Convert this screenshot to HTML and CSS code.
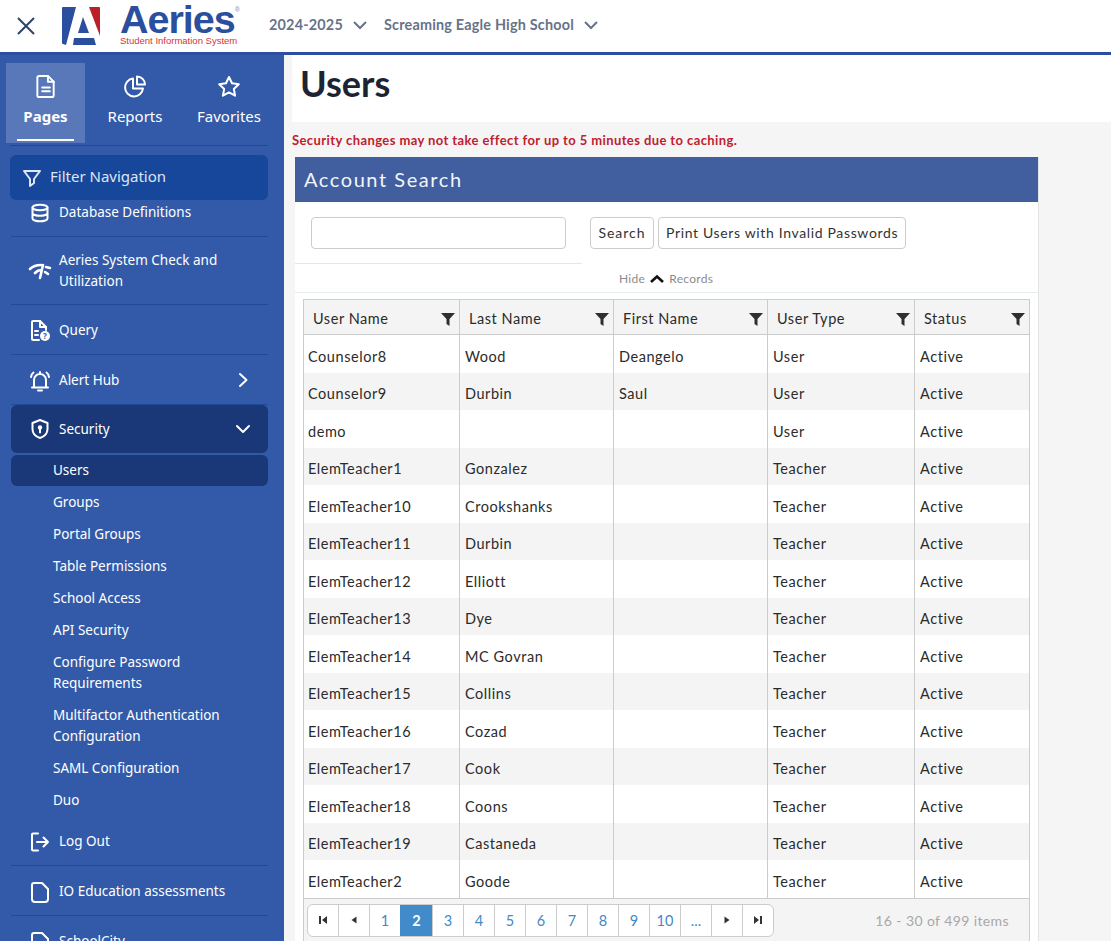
FILE: index.html
```html
<!DOCTYPE html>
<html lang="en">
<head>
<meta charset="utf-8">
<title>Users</title>
<link rel="stylesheet" href="styles.css">
</head>
<body>
<header class="topbar">
  <button class="close-btn" aria-label="Close">
    <svg width="22" height="22" viewBox="0 0 22 22"><path d="M3 3l16 16M19 3L3 19" class="ic-close"/></svg>
  </button>
  <svg class="logo-mark" width="40" height="40" viewBox="0 0 40 40">
    <path d="M2 1h13L5 39 2 38a1 1 0 0 1-1-1V2a1 1 0 0 1 1-1z" fill="#2a4f9f"/>
    <path d="M28 1h10a1 1 0 0 1 1 1v28z" fill="#bb2028"/>
    <path d="M22 11l6 16H17z" fill="#2a4f9f"/>
    <path d="M13 32h20l2 7H12z" fill="#2a4f9f"/>
  </svg>
  <div class="logo-text">
    <div class="logo-name"><span>Aeries</span><span class="logo-reg">®</span></div>
    <div class="logo-sub">Student Information System</div>
  </div>
  <div class="selector year">2024-2025
    <svg width="16" height="10" viewBox="0 0 16 10"><path d="M2 2l6 6 6-6" class="ic-chev"/></svg>
  </div>
  <div class="selector school">Screaming Eagle High School
    <svg width="16" height="10" viewBox="0 0 16 10"><path d="M2 2l6 6 6-6" class="ic-chev"/></svg>
  </div>
</header>
<div class="shell">
  <aside class="sidebar">
    <nav class="tabs">
      <div class="tab active">
        <svg width="24" height="26" viewBox="0 0 24 26"><path d="M5 2h9l6 6v14a2 2 0 0 1-2 2H5a2 2 0 0 1-2-2V4a2 2 0 0 1 2-2z" class="ic"/><path d="M14 2v6h6M8 14h8M8 18h8" class="ic"/></svg>
        <span>Pages</span>
      </div>
      <div class="tab">
        <svg width="24" height="24" viewBox="0 0 24 24"><path d="M10 4a9 9 0 1 0 10 10H10z" class="ic"/><path d="M14 2a8 8 0 0 1 8 8h-8z" class="ic"/></svg>
        <span>Reports</span>
      </div>
      <div class="tab">
        <svg width="24" height="24" viewBox="0 0 24 24"><path d="M12 2.500l3 6.300 6.800.9-5 4.700 1.300 6.800-6.100-3.300-6.100 3.300 1.300-6.800-5-4.700 6.800-.9z" class="ic"/></svg>
        <span>Favorites</span>
      </div>
    </nav>
    <div class="filter">
      <svg width="20" height="20" viewBox="0 0 20 20"><path d="M2 3h16l-6 8v4l-4 3v-7z" class="ic-soft"/></svg>
      <span>Filter Navigation</span>
    </div>
    <div class="nav-scroll">
      <ul class="nav">
        <li class="row">
          <svg width="20" height="20" viewBox="0 0 20 20"><ellipse cx="10" cy="4.500" rx="7.500" ry="2.800" class="ic"/><path d="M2.500 4.500v11c0 1.500 3.400 2.800 7.500 2.800s7.500-1.300 7.500-2.800v-11M2.500 10c0 1.500 3.400 2.800 7.500 2.800s7.500-1.300 7.500-2.800" class="ic"/></svg>
          <span>Database Definitions</span>
        </li>
        <li class="row tall">
          <svg width="24" height="20" viewBox="0 0 24 20"><path d="M2 8c3-3 7-4 11-4M7 12c2-2 4-3 6-3M12 17l3-13M18 6l4 1M17 11l3 2" class="ic-bold"/></svg>
          <span>Aeries System Check and Utilization</span>
        </li>
        <li class="row">
          <svg width="20" height="22" viewBox="0 0 20 22"><path d="M9 20H3a1 1 0 0 1-1-1V2a1 1 0 0 1 1-1h7l6 6v3" class="ic"/><path d="M10 1v6h6M5 11h3M5 15h3" class="ic"/><circle cx="15" cy="16" r="5" fill="#fff"/><text x="15" y="19" class="ic-q">?</text></svg>
          <span>Query</span>
        </li>
        <li class="row has-chevron">
          <svg width="22" height="22" viewBox="0 0 22 22"><path d="M5 17V10a6 6 0 0 1 12 0v7M3 17.500h16M9 20.500h4M11 2v2M2 7c.3-2 1-3.500 2.500-4.500M20 7c-.3-2-1-3.500-2.500-4.500" class="ic"/></svg>
          <span>Alert Hub</span>
          <svg class="chev" width="14" height="16" viewBox="0 0 14 16"><path d="M3 2l6.500 6L3 14" class="ic"/></svg>
        </li>
        <li class="row open has-chevron">
          <svg width="20" height="22" viewBox="0 0 20 22"><path d="M10 2l7.500 3v6c0 4.500-3 7.500-7.500 9-4.500-1.500-7.500-4.500-7.500-9V5z" class="ic"/><circle cx="10" cy="9.500" r="2.200" fill="#fff"/><path d="M10 10v4.500" class="ic"/></svg>
          <span>Security</span>
          <svg class="chev" width="16" height="14" viewBox="0 0 16 14"><path d="M2 4l6 6 6-6" class="ic"/></svg>
        </li>
        <li class="sub current">Users</li>
        <li class="sub">Groups</li>
        <li class="sub">Portal Groups</li>
        <li class="sub">Table Permissions</li>
        <li class="sub">School Access</li>
        <li class="sub">API Security</li>
        <li class="sub">Configure Password Requirements</li>
        <li class="sub">Multifactor Authentication Configuration</li>
        <li class="sub">SAML Configuration</li>
        <li class="sub">Duo</li>
        <li class="row logout">
          <svg width="20" height="20" viewBox="0 0 20 20"><path d="M8 1.500H3a1 1 0 0 0-1 1v15a1 1 0 0 0 1 1h5M7 10h11M13.500 5.500L18 10l-4.500 4.500" class="ic"/></svg>
          <span>Log Out</span>
        </li>
        <li class="row">
          <svg width="20" height="22" viewBox="0 0 20 22"><path d="M4 2h8l6 6v10a3 3 0 0 1-3 3H5a3 3 0 0 1-3-3V4a2 2 0 0 1 2-2z" class="ic"/></svg>
          <span>IO Education assessments</span>
        </li>
        <li class="row">
          <svg width="20" height="22" viewBox="0 0 20 22"><path d="M4 2h8l6 6v10a3 3 0 0 1-3 3H5a3 3 0 0 1-3-3V4a2 2 0 0 1 2-2z" class="ic"/></svg>
          <span>SchoolCity</span>
        </li>
      </ul>
    </div>
  </aside>
  <main class="main">
    <div class="title-box"><h1>Users</h1></div>
    <p class="warning">Security changes may not take effect for up to 5 minutes due to caching.</p>
    <section class="panel">
      <h2 class="panel-head">Account Search</h2>
      <div class="search-row">
        <div class="search-left"><input class="search-input" type="text" aria-label="Search"></div>
        <button class="btn btn-search">Search</button>
        <button class="btn">Print Users with Invalid Passwords</button>
      </div>
      <div class="hide-row">
        <span>Hide</span>
        <svg width="14" height="10" viewBox="0 0 14 10"><path d="M1 8L7 2.500 13 8" class="ic-up"/></svg>
        <span>Records</span>
      </div>
      <div class="grid-wrap">
        <table class="grid">
          <colgroup><col class="c1"><col class="c2"><col class="c3"><col class="c4"><col class="c5"></colgroup>
          <thead>
            <tr>
              <th><div class="th-in">User Name<svg class="funnel" viewBox="0 0 14 14"><path d="M0 1h14L8.500 7v7l-3-2V7z"/></svg></div></th>
              <th><div class="th-in">Last Name<svg class="funnel" viewBox="0 0 14 14"><path d="M0 1h14L8.500 7v7l-3-2V7z"/></svg></div></th>
              <th><div class="th-in">First Name<svg class="funnel" viewBox="0 0 14 14"><path d="M0 1h14L8.500 7v7l-3-2V7z"/></svg></div></th>
              <th><div class="th-in">User Type<svg class="funnel" viewBox="0 0 14 14"><path d="M0 1h14L8.500 7v7l-3-2V7z"/></svg></div></th>
              <th><div class="th-in">Status<svg class="funnel" viewBox="0 0 14 14"><path d="M0 1h14L8.500 7v7l-3-2V7z"/></svg></div></th>
            </tr>
          </thead>
          <tbody>
            <tr><td>Counselor8</td><td>Wood</td><td>Deangelo</td><td>User</td><td>Active</td></tr>
            <tr><td>Counselor9</td><td>Durbin</td><td>Saul</td><td>User</td><td>Active</td></tr>
            <tr><td>demo</td><td></td><td></td><td>User</td><td>Active</td></tr>
            <tr><td>ElemTeacher1</td><td>Gonzalez</td><td></td><td>Teacher</td><td>Active</td></tr>
            <tr><td>ElemTeacher10</td><td>Crookshanks</td><td></td><td>Teacher</td><td>Active</td></tr>
            <tr><td>ElemTeacher11</td><td>Durbin</td><td></td><td>Teacher</td><td>Active</td></tr>
            <tr><td>ElemTeacher12</td><td>Elliott</td><td></td><td>Teacher</td><td>Active</td></tr>
            <tr><td>ElemTeacher13</td><td>Dye</td><td></td><td>Teacher</td><td>Active</td></tr>
            <tr><td>ElemTeacher14</td><td>MC Govran</td><td></td><td>Teacher</td><td>Active</td></tr>
            <tr><td>ElemTeacher15</td><td>Collins</td><td></td><td>Teacher</td><td>Active</td></tr>
            <tr><td>ElemTeacher16</td><td>Cozad</td><td></td><td>Teacher</td><td>Active</td></tr>
            <tr><td>ElemTeacher17</td><td>Cook</td><td></td><td>Teacher</td><td>Active</td></tr>
            <tr><td>ElemTeacher18</td><td>Coons</td><td></td><td>Teacher</td><td>Active</td></tr>
            <tr><td>ElemTeacher19</td><td>Castaneda</td><td></td><td>Teacher</td><td>Active</td></tr>
            <tr><td>ElemTeacher2</td><td>Goode</td><td></td><td>Teacher</td><td>Active</td></tr>
          </tbody>
        </table>
        <div class="pager">
          <div class="pages">
            <a class="pg nav-btn"><svg width="10" height="10" viewBox="0 0 10 10"><path d="M1 1h2v8H1zM9 1v8L4 5z"/></svg></a>
            <a class="pg nav-btn"><svg width="10" height="10" viewBox="0 0 10 10"><path d="M7.500 1.500v7L2.500 5z"/></svg></a>
            <a class="pg">1</a>
            <a class="pg on">2</a>
            <a class="pg">3</a>
            <a class="pg">4</a>
            <a class="pg">5</a>
            <a class="pg">6</a>
            <a class="pg">7</a>
            <a class="pg">8</a>
            <a class="pg">9</a>
            <a class="pg">10</a>
            <a class="pg">...</a>
            <a class="pg nav-btn"><svg width="10" height="10" viewBox="0 0 10 10"><path d="M2.500 1.500v7L7.500 5z"/></svg></a>
            <a class="pg nav-btn"><svg width="10" height="10" viewBox="0 0 10 10"><path d="M1 1v8l5-4zM7 1h2v8H7z"/></svg></a>
          </div>
          <span class="info">16 - 30 of 499 items</span>
        </div>
      </div>
    </section>
  </main>
</div>
</body>
</html>
```
FILE: styles.css
```css
* { box-sizing: border-box; }
html, body { margin: 0; height: 941px; overflow: hidden; }
body { font-family: "Lato", "Liberation Sans", sans-serif; background: #f5f5f5; color: #2b2b2b; }

.topbar { height: 55px; background: #fff; border-bottom: 3px solid #2a4f9f; display: flex; align-items: center; padding-left: 15px; }
.close-btn { width: 22px; height: 22px; padding: 0; border: 0; background: none; display: flex; }
.ic-close { stroke: #2c4562; stroke-width: 2; fill: none; }
.logo-mark { margin-left: 24px; margin-top: -1px; flex: none; }
.logo-text { margin-left: 19px; width: 125px; flex: none; margin-top: -6px; }
.logo-name { font-family: "Liberation Sans", sans-serif; font-weight: 700; font-size: 39.500px; line-height: 36px; color: #2a4f9f; letter-spacing: -1px; display: flex; align-items: flex-start; }
.logo-reg { font-size: 7px; line-height: 9px; font-weight: 400; letter-spacing: 0; color: #7d8fb5; margin-top: 4px; }
.logo-sub { font-family: "Liberation Sans", sans-serif; font-size: 9.500px; line-height: 11px; margin-top: -2px; color: #d3343c; }
.selector { font-size: 14.400px; font-weight: 700; color: #66738a; display: flex; align-items: center; gap: 9px; letter-spacing: 0.2px; margin-top: -3px; }
.selector.year { margin-left: 24px; }
.selector.school { margin-left: 16px; }
.ic-chev { fill: none; stroke: #66738a; stroke-width: 2; }

.shell { display: flex; height: 886px; }
.sidebar { width: 284px; flex: none; background: #335aa8; color: #fff; display: flex; flex-direction: column; overflow: hidden; font-family: "Noto Sans", sans-serif; }
.ic { fill: none; stroke: #fff; stroke-width: 2; stroke-linejoin: round; stroke-linecap: round; }
.ic-bold { fill: none; stroke: #fff; stroke-width: 2.600; stroke-linecap: round; }
.ic-soft { fill: none; stroke: #dfe5f2; stroke-width: 2; stroke-linejoin: round; }
.ic-q { font-size: 8px; font-weight: 700; text-anchor: middle; fill: #335aa8; }

.tabs { display: flex; margin: 8px 16px 0 6px; height: 80px; position: relative; flex: none; }
.tabs::after { content: ""; position: absolute; left: 4px; right: 0; bottom: -3px; height: 1px; background: #1f4a9a; }
.tab { width: 79px; flex: none; display: flex; flex-direction: column; align-items: center; padding-top: 11px; gap: 7px; font-size: 15px; position: relative; }
.tab:nth-child(2) { width: 100px; }
.tab:nth-child(3) { width: 88px; }
.tab span { line-height: 20px; }
.tab svg { height: 25px; }
.tab.active { background: #5878b9; font-weight: 700; }
.tab.active::after { content: ""; position: absolute; left: 11px; width: 57px; bottom: 2px; height: 2px; background: #fff; }

.filter { margin: 12px 16px 0 10px; height: 45px; background: #17479b; border-radius: 6px; display: flex; align-items: center; gap: 8px; padding: 0 0 3px 12px; color: #dfe5f2; font-size: 15px; flex: none; }
.filter svg { margin-top: 3px; }

.nav-scroll { flex: 1; overflow: hidden; }
.nav { list-style: none; margin: -13px 16px 0 11px; padding: 0; font-size: 13.500px; line-height: 21px; }
.row { height: 50px; display: flex; align-items: center; position: relative; padding: 2px 0 0 18px; border-bottom: 1px solid #1f4a9a; }
.row > svg:first-child { width: 24px; flex: none; margin-right: 7px; margin-left: -1px; }
.row.tall { height: 68px; padding-top: 0; }
.row .chev { position: absolute; right: 17px; top: 50%; transform: translateY(-50%); }
.row.open { height: 48px; padding-top: 0; background: #1a3877; border: 0; border-radius: 6px; }
.row.logout { height: 49px; padding-top: 1px; }
.sub { padding: 5px 42px 6px; }
.sub.current { margin-top: 2px; background: #1a3877; border-radius: 6px; height: 31px; margin-bottom: 1px; }

.main { flex: 1; min-width: 0; padding-left: 8px; }
.title-box { height: 67px; background: #fff; padding-left: 8px; }
h1 { margin: 0; font-size: 36px; line-height: 56px; font-weight: 700; color: #1c2433; }
.warning { margin: 0; padding-top: 11px; height: 35px; font-size: 13px; line-height: 14px; font-weight: 700; color: #c0202e; letter-spacing: 0.41px; }
.panel { margin-left: 3px; width: 744px; background: #fff; border-right: 1px solid #e4e4e4; }
.panel-head { margin: 0; height: 45px; background: #415f9f; color: #f2f4f9; font-size: 20px; line-height: 45px; font-weight: 400; padding-left: 9px; letter-spacing: 1.570px; }
.search-row { display: flex; align-items: flex-start; height: 62px; }
.search-left { width: 287px; height: 62px; padding: 15px 0 0 16px; border-bottom: 1px solid #e6e6e6; margin-right: 8px; flex: none; }
.search-input { width: 255px; height: 32px; border: 1px solid #ccc; border-radius: 4px; background: #fff; display: block; }
.btn { height: 32px; margin-top: 15px; margin-right: 4px; padding: 0 7px 2px; background: #fff; border: 1px solid #ccc; border-radius: 4px; font-family: inherit; font-size: 14px; color: #333; letter-spacing: 0.65px; }
.btn-search { width: 64px; padding: 0 0 2px; letter-spacing: 1px; }
.hide-row { height: 29px; border-bottom: 1px solid #e6edf0; display: flex; align-items: center; gap: 5px; padding: 1px 0 0 324px; font-size: 12px; color: #8b8b8b; letter-spacing: 0.3px; }
.ic-up { fill: none; stroke: #111; stroke-width: 2.600; }

.grid-wrap { margin: 6px 8px 0; width: 727px; border: 1px solid #ccc; border-bottom: 0; }
.grid { width: 725px; border-collapse: separate; border-spacing: 0; table-layout: fixed; font-size: 14.500px; letter-spacing: 0.55px; }
.c1 { width: 155px; } .c2 { width: 154px; } .c3 { width: 154px; } .c4 { width: 147px; } .c5 { width: 115px; }
.grid th { height: 35px; background: #f4f4f4; font-weight: 400; text-align: left; padding: 0; border-bottom: 1px solid #ccc; border-left: 1px solid #ccc; }
.grid th:first-child, .grid td:first-child { border-left: 0; }
.th-in { display: flex; align-items: center; justify-content: space-between; padding: 2px 4px 0 9px; }
.funnel { width: 14px; height: 14px; fill: #2f2f2f; margin-top: 1px; }
.grid td { height: 37.500px; padding: 5px 5px 0; border-left: 1px solid #ccc; white-space: nowrap; }
.grid td:first-child { padding-left: 4px; }
.grid tbody tr:nth-child(even) td { background: #f4f4f4; }
.pager { height: 44px; background: #f4f4f4; border-top: 1px solid #ccc; display: flex; align-items: center; justify-content: space-between; padding: 0 20px 0 3px; }
.pages { display: flex; border: 1px solid #ccc; border-radius: 6px; background: #fff; height: 33px; overflow: hidden; }
.pg { width: 31px; display: flex; align-items: center; justify-content: center; border-left: 1px solid #ccc; color: #4289c9; font-size: 14.500px; }
.pg:first-child { border-left: 0; width: 30px; }
.pg.on { width: 32px; background: #428bca; color: #fff; font-weight: 700; border-left-color: #428bca; }
.nav-btn svg { fill: #333; }
.info { font-size: 14px; color: #a8a8a8; letter-spacing: 0.4px; }
```
